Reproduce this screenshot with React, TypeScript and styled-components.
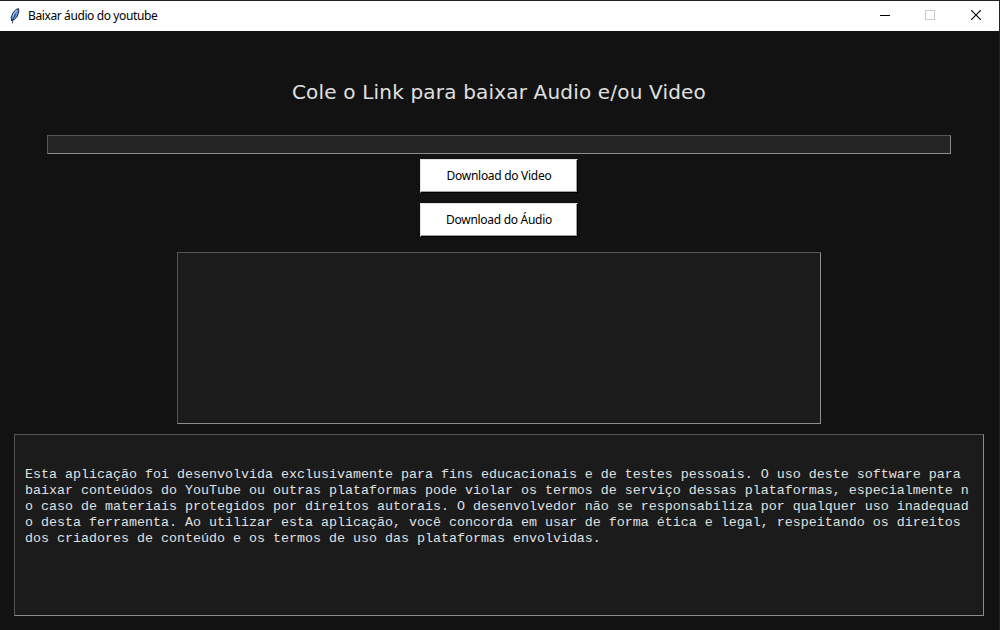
import React from "react";
import styled, { createGlobalStyle } from "styled-components";

const GlobalStyle = createGlobalStyle`
  * { box-sizing: border-box; }
  html, body { margin: 0; padding: 0; background: #121212; }
  body { overflow: hidden; }
`;

const Window = styled.div`
  width: 1000px;
  height: 630px;
  display: flex;
  flex-direction: column;
  background: #121212;
  border-top: 1px solid #222224;
  border-right: 1px solid #242424;
`;

const TitleBar = styled.header`
  flex: 0 0 30px;
  display: flex;
  align-items: center;
  background: #ffffff;
  padding: 0 1px 0 8px;
`;

const WindowTitle = styled.span`
  flex: 1;
  margin-left: 4px;
  font: 12px/16px "Noto Sans", "Open Sans", sans-serif;
  letter-spacing: -0.39px;
  color: #000000;
`;

const WindowControl = styled.span`
  width: 45px;
  height: 30px;
  display: flex;
  align-items: center;
  justify-content: center;
  padding: 0 1px 2px 0;

  &:last-child {
    padding: 0 0 2px 1px;
  }
`;

const Content = styled.main`
  flex: 1;
  display: flex;
  flex-direction: column;
  align-items: center;
  width: 998px;
`;

const Heading = styled.h1`
  margin: 48px 0 30px;
  font: 400 20px/26px "DejaVu Sans", sans-serif;
  letter-spacing: 0.18px;
  color: #e0e0e0;
  white-space: nowrap;
`;

const Sunken = styled.div`
  border: 1px solid;
  border-color: #555555 #8c8c8c #8c8c8c #555555;
`;

const LinkField = styled(Sunken)`
  width: 904px;
  height: 19px;
  background: #252525;
`;

const Buttons = styled.div`
  display: flex;
  flex-direction: column;
  gap: 10px;
  margin: 5px 0 15px;
`;

const DownloadButton = styled.button`
  width: 158px;
  height: 34px;
  padding: 0;
  border: 1px solid;
  border-color: #e3e3e3 #000000 #000000 #e3e3e3;
  box-shadow: inset -1px -1px 0 #a0a0a0;
  background: #ffffff;
  color: #000000;
  font: 12px/16px "Noto Sans", "Open Sans", sans-serif;
  letter-spacing: -0.29px;
`;

const LogBox = styled(Sunken)`
  width: 644px;
  height: 172px;
  background: #1b1b1b;
`;

const Notice = styled(Sunken)`
  width: 970px;
  height: 182px;
  margin-top: 10px;
  padding: 32px 10px 0;
  background: #1b1b1b;
  color: #e0e0e0;
  font: 13.333px/16px "Liberation Mono", monospace;
  white-space: pre;
`;

const noticeText = `Esta aplicação foi desenvolvida exclusivamente para fins educacionais e de testes pessoais. O uso deste software para
baixar conteúdos do YouTube ou outras plataformas pode violar os termos de serviço dessas plataformas, especialmente n
o caso de materiais protegidos por direitos autorais. O desenvolvedor não se responsabiliza por qualquer uso inadequad
o desta ferramenta. Ao utilizar esta aplicação, você concorda em usar de forma ética e legal, respeitando os direitos
dos criadores de conteúdo e os termos de uso das plataformas envolvidas.`;

const FeatherIcon = () => (
  <svg width="16" height="16" viewBox="0 0 16 16">
    <path d="M3.7 13 3.2 9.6 4.8 5 8.1 1.4 10.6.7 10.8 4 9.2 8.5 6.2 11.7 4.5 12Z" fill="#5f96dc" stroke="#101820" strokeWidth=".9" />
    <path d="M8.8 2 5.8 5.6 4.6 9.5" fill="none" stroke="#a8ccf5" strokeWidth="1" />
    <path d="M7.6 6 5 11 4.3 15.5" fill="none" stroke="#172a45" strokeWidth=".8" />
  </svg>
);

export default function App() {
  return (
    <>
      <GlobalStyle />
      <Window>
        <TitleBar>
          <FeatherIcon />
          <WindowTitle>Baixar áudio do youtube</WindowTitle>
          <WindowControl>
            <svg width="10" height="10" shapeRendering="crispEdges">
              <path d="M0 5.5H10" stroke="#000" />
            </svg>
          </WindowControl>
          <WindowControl>
            <svg width="10" height="10" shapeRendering="crispEdges">
              <rect x=".5" y=".5" width="9" height="9" fill="none" stroke="#ccc" />
            </svg>
          </WindowControl>
          <WindowControl>
            <svg width="10" height="10">
              <path d="M0 0 10 10M10 0 0 10" stroke="#000" strokeWidth="1.1" />
            </svg>
          </WindowControl>
        </TitleBar>
        <Content>
          <Heading>Cole o Link para baixar Audio e/ou Video</Heading>
          <LinkField />
          <Buttons>
            <DownloadButton>Download do Video</DownloadButton>
            <DownloadButton>Download do Áudio</DownloadButton>
          </Buttons>
          <LogBox />
          <Notice>{noticeText}</Notice>
        </Content>
      </Window>
    </>
  );
}
